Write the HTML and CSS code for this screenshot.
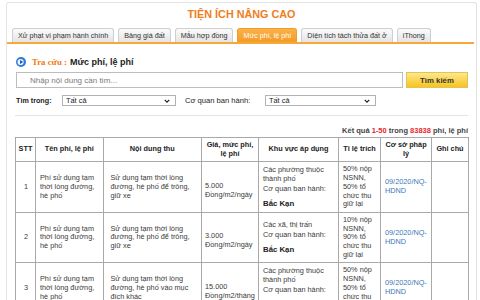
FILE: index.html
```html
<!DOCTYPE html>
<html lang="vi">
<head>
<meta charset="utf-8">
<title>Tiện ích nâng cao</title>
<link rel="stylesheet" href="styles.css">
</head>
<body>
<div class="panel">
  <h1 class="title">TIỆN ÍCH NÂNG CAO</h1>
  <div class="tabs">
    <a class="tab">Xử phạt vi phạm hành chính</a>
    <a class="tab">Bảng giá đất</a>
    <a class="tab">Mẫu hợp đồng</a>
    <a class="tab active">Mức phí, lệ phí</a>
    <a class="tab">Diện tích tách thửa đất ở</a>
    <a class="tab">iThong</a>
  </div>
  <div class="content">
    <div class="heading">
      <svg class="bullet" viewBox="0 0 10 10" width="10" height="10">
        <circle cx="5" cy="5" r="5" fill="#2b7bd6"/>
        <circle cx="4.6" cy="5" r="3.1" fill="#eaf3fc"/>
        <polygon points="4,3 7.2,5 4,7" fill="#1d5fb4"/>
      </svg>
      <span class="lead">Tra cứu :</span>
      <span class="topic">Mức phí, lệ phí</span>
    </div>
    <div class="search">
      <input class="query" type="text" placeholder="Nhập nội dung cần tìm...">
      <button class="btn">Tìm kiếm</button>
    </div>
    <div class="filters">
      <span class="lbl lbl-in">Tìm trong:</span>
      <div class="select sel-in"><span class="sel-text">Tất cả</span>
        <svg class="chev" viewBox="0 0 8 5" width="6" height="4"><polyline points="1,1 4,4 7,1" fill="none" stroke="#222" stroke-width="1.6"/></svg>
      </div>
      <span class="lbl lbl-org">Cơ quan ban hành:</span>
      <div class="select sel-org"><span class="sel-text">Tất cả</span>
        <svg class="chev" viewBox="0 0 8 5" width="6" height="4"><polyline points="1,1 4,4 7,1" fill="none" stroke="#222" stroke-width="1.6"/></svg>
      </div>
    </div>
    <div class="divider"></div>
    <p class="summary">Kết quả <span class="num">1-50</span> trong <span class="num">83838</span> phí, lệ phí</p>
    <table class="grid">
      <colgroup>
        <col class="c-stt"><col class="c-name"><col class="c-desc"><col class="c-price">
        <col class="c-area"><col class="c-rate"><col class="c-law"><col class="c-note">
      </colgroup>
      <thead>
        <tr>
          <th>STT</th><th>Tên phí, lệ phí</th><th>Nội dung thu</th><th>Giá, mức phí, lệ phí</th>
          <th>Khu vực áp dụng</th><th>Tỉ lệ trích</th><th>Cơ sở pháp lý</th><th>Ghi chú</th>
        </tr>
      </thead>
      <tbody>
        <tr>
          <td class="stt">1</td>
          <td>Phí sử dụng tạm thời lòng đường, hè phố</td>
          <td class="desc">Sử dụng tạm thời lòng đường, hè phố để trông, giữ xe</td>
          <td class="price">5.000 Đồng/m2/ngày</td>
          <td><div>Các phường thuộc thành phố</div><div class="issuer">Cơ quan ban hành:</div><div class="place">Bắc Kạn</div></td>
          <td>50% nộp NSNN, 50% tổ chức thu giữ lại</td>
          <td><a class="law">09/2020/NQ-HDND</a></td>
          <td></td>
        </tr>
        <tr>
          <td class="stt">2</td>
          <td>Phí sử dụng tạm thời lòng đường, hè phố</td>
          <td class="desc">Sử dụng tạm thời lòng đường, hè phố để trông, giữ xe</td>
          <td class="price">3.000 Đồng/m2/ngày</td>
          <td><div>Các xã, thị trấn</div><div class="issuer">Cơ quan ban hành:</div><div class="place">Bắc Kạn</div></td>
          <td>10% nộp NSNN, 90% tổ chức thu giữ lại</td>
          <td><a class="law">09/2020/NQ-HDND</a></td>
          <td></td>
        </tr>
        <tr>
          <td class="stt">3</td>
          <td>Phí sử dụng tạm thời lòng đường, hè phố</td>
          <td class="desc">Sử dụng tạm thời lòng đường, hè phố vào mục đích khác</td>
          <td class="price">15.000 Đồng/m2/tháng</td>
          <td><div>Các phường thuộc thành phố</div><div class="issuer">Cơ quan ban hành:</div><div class="place">Bắc Kạn</div></td>
          <td>50% nộp NSNN, 50% tổ chức thu giữ lại</td>
          <td><a class="law">09/2020/NQ-HDND</a></td>
          <td></td>
        </tr>
      </tbody>
    </table>
  </div>
</div>
</body>
</html>
```

FILE: styles.css
```css
html, body {
  margin: 0;
  padding: 0;
  background: #ffffff;
}
body {
  font-family: "Liberation Sans", Arial, sans-serif;
  color: #333;
  overflow: hidden;
}
.panel {
  margin: 2px 3px 0 6px;
  border: 1px solid #e3e3e3;
  border-bottom: none;
  border-radius: 3px 3px 0 0;
  height: 320px;
}
.title {
  margin: 0;
  padding-top: 5px;
  font-size: 10.8px;
  line-height: 13px;
  font-weight: bold;
  text-align: center;
  color: #f07d1c;
}
.tabs {
  display: flex;
  gap: 4px;
  margin: 7px 2px 0 0;
  padding-left: 5px;
  border-bottom: 2px solid #f6a83c;
}
.tab {
  display: block;
  height: 13px;
  line-height: 13px;
  padding: 0 5px 0 5px;
  font-size: 7.2px;
  color: #333;
  background: linear-gradient(#fbfbfb, #e4e4e4);
  border: 1px solid #cfcfcf;
  border-bottom: none;
  border-radius: 3px 3px 0 0;
}
.tab.active {
  background: linear-gradient(#fab24a, #f39b25);
  border-color: #f39b25;
  color: #fff;
}
.content {
  padding: 0 8px 0 8px;
}
.heading {
  display: flex;
  align-items: center;
  margin-top: 12px;
  height: 12px;
  padding-left: 1px;
}
.bullet {
  display: block;
  margin-right: 6px;
}
.lead {
  font-family: "Liberation Serif", serif;
  font-weight: bold;
  font-size: 8.8px;
  color: #f07a12;
  margin-right: 3px;
}
.topic {
  font-weight: bold;
  font-size: 9px;
  color: #222;
}
.search {
  display: flex;
  gap: 3px;
  margin-top: 4px;
  height: 16px;
}
.query {
  flex: 1;
  box-sizing: border-box;
  height: 16px;
  margin: 0 0 0 1px;
  padding: 0 0 0 13px;
  border: 1px solid #bdbdbd;
  font-family: "Liberation Sans", Arial, sans-serif;
  font-size: 8px;
  color: #333;
  outline: none;
}
.query::placeholder {
  color: #7a7a7a;
}
.btn {
  box-sizing: border-box;
  width: 62px;
  height: 16px;
  margin: 0;
  padding: 0;
  border: 1px solid #e2c35a;
  background: linear-gradient(#fde88c, #f8c31f);
  font-family: "Liberation Sans", Arial, sans-serif;
  font-weight: bold;
  font-size: 7.8px;
  color: #333;
}
.filters {
  display: flex;
  align-items: center;
  margin-top: 7px;
  height: 11px;
}
.lbl {
  font-size: 7.6px;
  color: #222;
}
.lbl-in {
  width: 46px;
  padding-left: 1px;
  font-weight: bold;
  font-size: 7.2px;
}
.lbl-org {
  width: 80px;
  margin-left: 9px;
}
.select {
  box-sizing: border-box;
  display: flex;
  align-items: center;
  justify-content: space-between;
  height: 11px;
  padding: 0 5px 0 3px;
  border: 1px solid #b3b3b3;
  background: #fff;
}
.sel-in {
  width: 114px;
}
.sel-org {
  width: 111px;
}
.sel-text {
  font-size: 7.4px;
  color: #222;
}
.chev {
  display: block;
}
.divider {
  margin-top: 9px;
  border-top: 1px solid #e2e2e2;
}
.summary {
  margin: 10px 0 0 0;
  line-height: 10px;
  text-align: right;
  font-size: 7.5px;
  font-weight: bold;
  color: #444;
}
.num {
  color: #e8262c;
}
.grid {
  margin-top: 1px;
  width: 453px;
  table-layout: fixed;
  border-collapse: collapse;
  font-size: 7.3px;
  line-height: 8.7px;
  color: #3a3a3a;
}
.c-stt { width: 20px; }
.c-name { width: 67.5px; }
.c-desc { width: 98.5px; }
.c-price { width: 57px; }
.c-area { width: 80px; }
.c-rate { width: 42px; }
.c-law { width: 51px; }
.c-note { width: 37px; }
.grid th,
.grid td {
  border: 1px solid #a9a9a9;
  padding: 3px 3px 3px 4px;
  vertical-align: middle;
  text-align: left;
  word-wrap: break-word;
}
.grid th {
  font-weight: bold;
  text-align: center;
  color: #222;
  padding: 3px 2px;
}
.grid td.stt {
  text-align: center;
}
.grid td.desc {
  padding-left: 7px;
}
.grid td.price {
  padding: 10px 1px 3px 3px;
}
.issuer {
  margin-top: 1.5px;
}
.place {
  margin-top: 5px;
  font-weight: bold;
  font-size: 7.8px;
  line-height: 9px;
  color: #222;
}
.law {
  color: #3d78b8;
  text-decoration: none;
}
```
